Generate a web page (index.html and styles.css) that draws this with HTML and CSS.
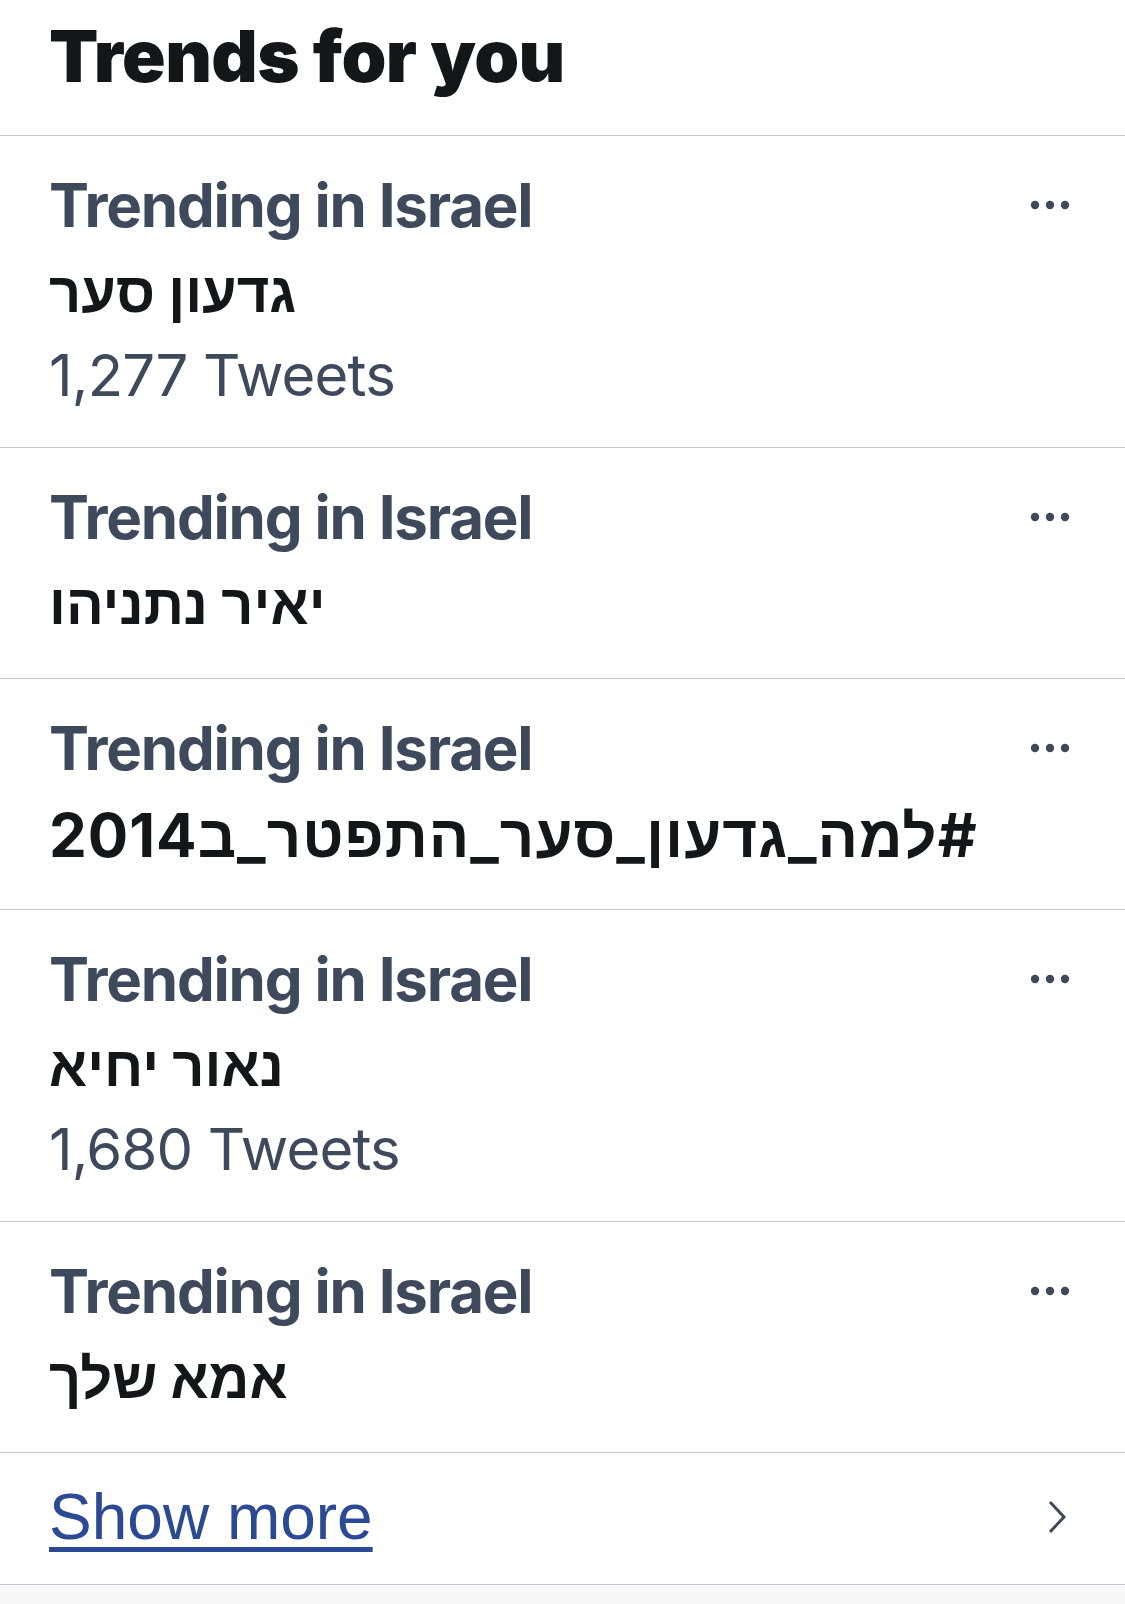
FILE: index.html
```html
<!DOCTYPE html>
<html>

<head>
  <title>Trends for you</title>
  <link rel="stylesheet" href="styles.css">
</head>

<body>
  <div class="trends">
    <h2 class="trends-title">Trends for you</h2>

    <div class="trend">
      <div class="trend-head">
        <span class="trend-context">Trending in Israel</span>
        <svg class="more-icon" width="40" height="10" viewBox="0 0 40 10"><circle cx="5" cy="5" r="4.2"/><circle cx="20" cy="5" r="4.2"/><circle cx="35" cy="5" r="4.2"/></svg>
      </div>
      <div class="trend-name" dir="auto">גדעון סער</div>
      <div class="trend-count">1,277 Tweets</div>
    </div>

    <div class="trend">
      <div class="trend-head">
        <span class="trend-context">Trending in Israel</span>
        <svg class="more-icon" width="40" height="10" viewBox="0 0 40 10"><circle cx="5" cy="5" r="4.2"/><circle cx="20" cy="5" r="4.2"/><circle cx="35" cy="5" r="4.2"/></svg>
      </div>
      <div class="trend-name" dir="auto">יאיר נתניהו</div>
    </div>

    <div class="trend">
      <div class="trend-head">
        <span class="trend-context">Trending in Israel</span>
        <svg class="more-icon" width="40" height="10" viewBox="0 0 40 10"><circle cx="5" cy="5" r="4.2"/><circle cx="20" cy="5" r="4.2"/><circle cx="35" cy="5" r="4.2"/></svg>
      </div>
      <div class="trend-name trend-tag" dir="auto">#למה_גדעון_סער_התפטר_ב2014</div>
    </div>

    <div class="trend">
      <div class="trend-head">
        <span class="trend-context">Trending in Israel</span>
        <svg class="more-icon" width="40" height="10" viewBox="0 0 40 10"><circle cx="5" cy="5" r="4.2"/><circle cx="20" cy="5" r="4.2"/><circle cx="35" cy="5" r="4.2"/></svg>
      </div>
      <div class="trend-name" dir="auto">נאור יחיא</div>
      <div class="trend-count">1,680 Tweets</div>
    </div>

    <div class="trend">
      <div class="trend-head">
        <span class="trend-context">Trending in Israel</span>
        <svg class="more-icon" width="40" height="10" viewBox="0 0 40 10"><circle cx="5" cy="5" r="4.2"/><circle cx="20" cy="5" r="4.2"/><circle cx="35" cy="5" r="4.2"/></svg>
      </div>
      <div class="trend-name" dir="auto">אמא שלך</div>
    </div>

    <div class="show-more">
      <a href="#" class="show-more-link">Show more</a>
      <svg class="chevron" width="20" height="34" viewBox="0 0 20 34"><polyline points="3,2 17,17 3,32"/></svg>
    </div>
  </div>
</body>

</html>
```

FILE: styles.css
```css
body {
  margin: 0;
  background-color: #f7f8fa;
  font-family: Inter, "Liberation Sans", sans-serif;
  color: #14171a;
}

.trends {
  background-color: #fff;
}

.trends-title {
  margin: 0;
  padding: 14px 0 37px 49px;
  font-size: 72px;
  font-weight: 900;
  line-height: 84px;
  letter-spacing: -0.6px;
  border-bottom: 1px solid #c4c8cc;
}

.trend {
  padding: 25px 55px 31px 49px;
  border-bottom: 1px solid #c4c8cc;
}

.trend-head {
  display: flex;
  justify-content: space-between;
  align-items: center;
  height: 88px;
}

.trend-context {
  font-size: 60px;
  font-weight: 700;
  line-height: 88px;
  letter-spacing: -1.2px;
  color: #3e4a5b;
}

.more-icon {
  fill: #3e4a5b;
}

.trend-name {
  font-family: Inter, "Liberation Sans", sans-serif;
  font-size: 56px;
  font-weight: 700;
  line-height: 86px;
  text-align: left;
  color: #14171a;
}

.trend-tag {
  font-size: 60px;
  letter-spacing: 1px;
}

.trend-count {
  font-size: 58px;
  font-weight: 400;
  line-height: 81px;
  letter-spacing: -0.8px;
  color: #3e4a5b;
}

.show-more {
  display: flex;
  justify-content: space-between;
  align-items: center;
  padding: 24px 58px 27px 49px;
  border-bottom: 1px solid #c4c8cc;
}

.show-more-link {
  font-family: "Liberation Sans", Arial, sans-serif;
  font-size: 64px;
  line-height: 80px;
  color: #2c4a94;
  text-decoration-thickness: 5px;
  text-underline-offset: 8px;
}

.chevron {
  fill: none;
  stroke: #3e4a5b;
  stroke-width: 3;
}
```
